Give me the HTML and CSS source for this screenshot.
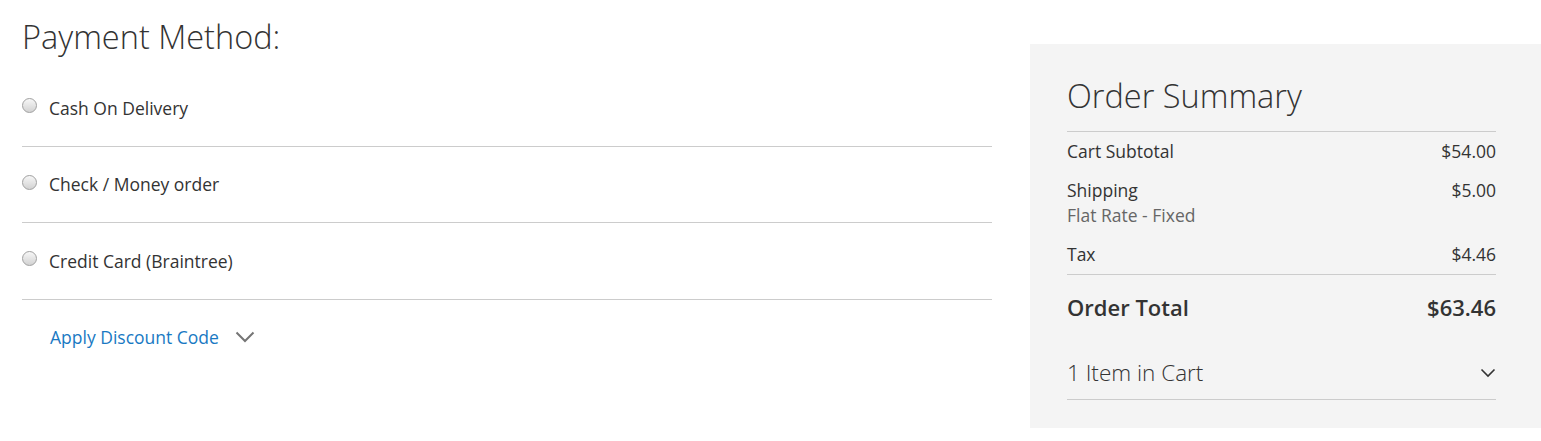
FILE: index.html
```html
<!DOCTYPE html>
<html lang="en">
<head>
    <meta charset="UTF-8">
    <title>Checkout - Payment</title>
    <link rel="stylesheet" href="styles.css">
</head>
<body>
    <div class="checkout">
        <div class="payment-step">
            <h2 class="step-title">Payment Method:</h2>

            <div class="payment-method">
                <input type="radio" name="payment" id="cashondelivery">
                <label for="cashondelivery">Cash On Delivery</label>
            </div>
            <div class="payment-method">
                <input type="radio" name="payment" id="checkmo">
                <label for="checkmo">Check / Money order</label>
            </div>
            <div class="payment-method">
                <input type="radio" name="payment" id="braintree">
                <label for="braintree">Credit Card (Braintree)</label>
            </div>

            <div class="discount">
                <a href="#" class="discount-toggle">Apply Discount Code</a>
                <svg class="chevron" width="20" height="12" viewBox="0 0 20 12">
                    <path d="M1.5 1.5 L10 10 L18.5 1.5" fill="none" stroke="#757575" stroke-width="2"/>
                </svg>
            </div>
        </div>

        <aside class="summary">
            <h2 class="summary-title">Order Summary</h2>
            <div class="totals">
                <div class="totals-row">
                    <span>Cart Subtotal</span>
                    <span>$54.00</span>
                </div>
                <div class="totals-row">
                    <span>Shipping<br><span class="shipping-method">Flat Rate - Fixed</span></span>
                    <span>$5.00</span>
                </div>
                <div class="totals-row">
                    <span>Tax</span>
                    <span>$4.46</span>
                </div>
                <div class="totals-row grand">
                    <span>Order Total</span>
                    <span>$63.46</span>
                </div>
            </div>
            <div class="items-toggle">
                <span>1 Item in Cart</span>
                <svg width="16" height="10" viewBox="0 0 16 10">
                    <path d="M1.5 1.5 L8 8 L14.5 1.5" fill="none" stroke="#333333" stroke-width="1.6"/>
                </svg>
            </div>
        </aside>
    </div>
</body>
</html>
```

FILE: styles.css
```css
body {
    font-family: 'Open Sans', 'Liberation Sans', Arial, sans-serif;
    color: #333333;
    background-color: #ffffff;
    margin: 0;
    padding: 0;
}

.checkout {
    display: flex;
    align-items: flex-start;
}

.payment-step {
    width: 970px;
    margin-left: 22px;
}

.step-title {
    font-weight: 300;
    font-size: 32.5px;
    line-height: 40px;
    margin: 17px 0 13px;
}

.payment-method {
    display: flex;
    align-items: center;
    height: 75.5px;
    border-bottom: 1px solid #cccccc;
}

.payment-method input[type="radio"] {
    appearance: none;
    width: 15px;
    height: 15px;
    margin: 0 12px 0 0;
    border-radius: 50%;
    border: 1px solid #a0a0a0;
    background: linear-gradient(#f7f7f7, #d2d2d2);
    position: relative;
    top: -2px;
}

.payment-method label {
    font-size: 17.5px;
}

.discount {
    display: flex;
    align-items: center;
    gap: 16px;
    height: 75px;
    padding-left: 28px;
}

.discount-toggle {
    color: #1979c3;
    text-decoration: none;
    font-size: 17.5px;
}

.summary {
    width: 429px;
    margin: 44px 0 0 38px;
    padding: 32px 45px 28px 37px;
    background-color: #f4f4f4;
}

.summary-title {
    font-weight: 300;
    font-size: 32.5px;
    line-height: 40px;
    margin: 0;
    padding-bottom: 15px;
    border-bottom: 1px solid #cccccc;
}

.totals-row {
    display: flex;
    justify-content: space-between;
    align-items: flex-start;
    font-size: 17.5px;
    line-height: 25px;
    padding: 7px 0;
}

.shipping-method {
    color: #666666;
}

.totals-row.grand {
    border-top: 1px solid #cccccc;
    font-size: 22px;
    font-weight: 600;
    padding: 20px 0;
}

.items-toggle {
    display: flex;
    justify-content: space-between;
    align-items: center;
    font-size: 22.5px;
    font-weight: 300;
    line-height: 32px;
    padding: 17px 0 10px;
    border-bottom: 1px solid #cccccc;
}
```
